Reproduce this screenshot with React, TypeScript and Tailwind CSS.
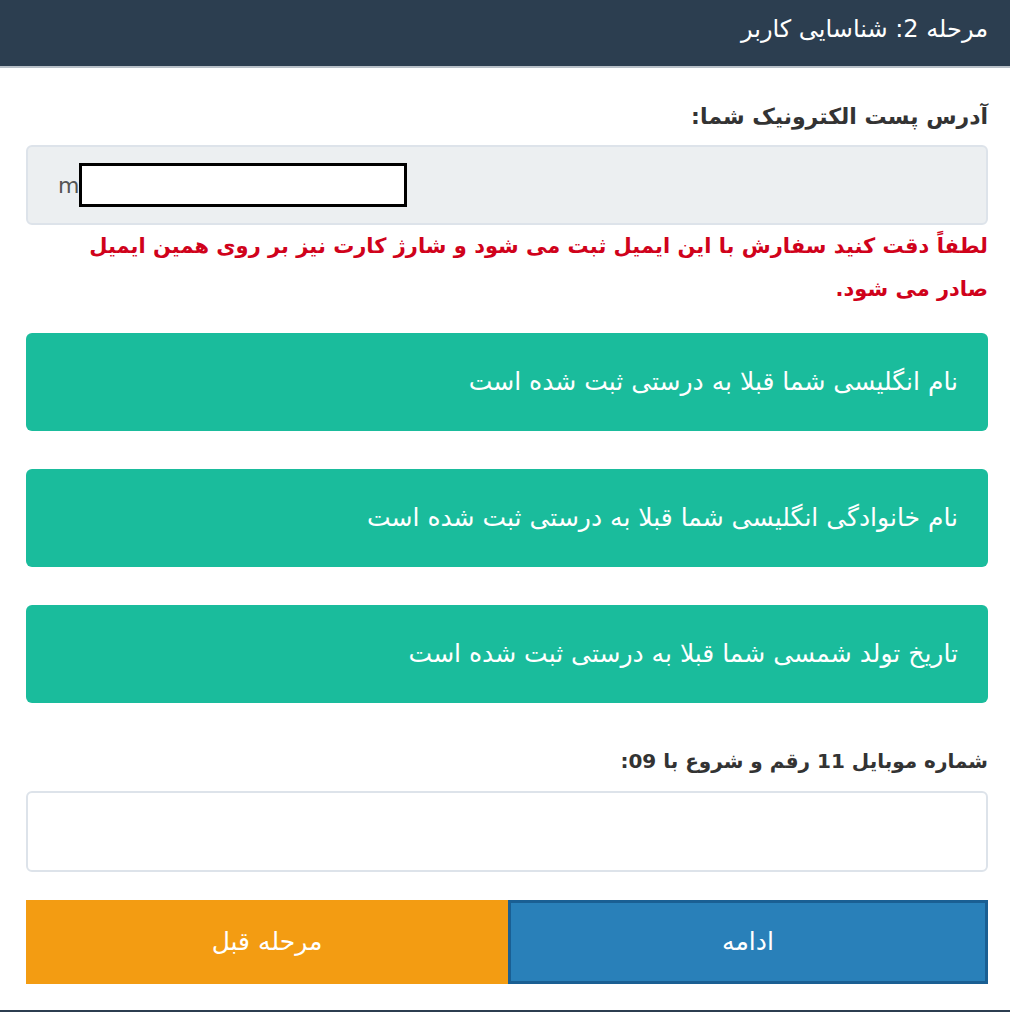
const font = { fontFamily: '"DejaVu Sans", "Noto Sans", sans-serif' };

const Notice = ({ text }: { text: string }) => (
  <div className="h-[98px] rounded-md bg-[#1abc9c] flex items-center pr-[30px] text-white text-[25px]">
    {text}
  </div>
);

export default function App() {
  return (
    <div dir="rtl" className="w-[1010px] min-h-[1024px] bg-white" style={font}>
      {/* Header */}
      <div className="h-[68px] bg-[#2c3e50] border-b-2 border-[#b8c0c8] flex items-center pb-[8px] pr-[22px] text-white text-[24px]">
        مرحله 2: شناسایی کاربر
      </div>

      <div className="pr-[22px] pl-[26px] pt-[32px]">
        <label className="block text-[#333] text-[22px] font-bold mb-[12px]">
          آدرس پست الکترونیک شما:
        </label>
        <div dir="ltr" className="h-[80px] rounded-md bg-[#eceff1] border-2 border-[#dde3ea] flex items-center pl-[30px] text-[#555] text-[22px]">
          <span>m</span>
          <div className="w-[328px] h-[44px] bg-white border-[3px] border-black" />
        </div>
        <p className="text-[#d0021b] text-[21px] font-bold leading-[43px]">
          لطفاً دقت کنید سفارش با این ایمیل ثبت می شود و شارژ کارت نیز بر روی همین ایمیل
          <br />
          صادر می شود.
        </p>

        <div className="flex flex-col gap-[38px] mt-[22px]">
          <Notice text="نام انگلیسی شما قبلا به درستی ثبت شده است" />
          <Notice text="نام خانوادگی انگلیسی شما قبلا به درستی ثبت شده است" />
          <Notice text="تاریخ تولد شمسی شما قبلا به درستی ثبت شده است" />
        </div>

        <label className="block text-[#333] text-[20px] font-bold mt-[43px] mb-[15px]">
          شماره موبایل 11 رقم و شروع با 09:
        </label>
        <div className="h-[81px] rounded-md bg-white border-2 border-[#dde3ea]" />

        <div className="flex mt-[28px] h-[84px]">
          <button className="w-[480px] bg-[#2980b9] border-[3px] border-[#1a5f93] text-white text-[25px]">
            ادامه
          </button>
          <button className="flex-1 bg-[#f39c12] text-white text-[25px]">
            مرحله قبل
          </button>
        </div>
      </div>

      <div className="mt-[26px] h-[2px] bg-[#2c3e50]" />
    </div>
  );
}
